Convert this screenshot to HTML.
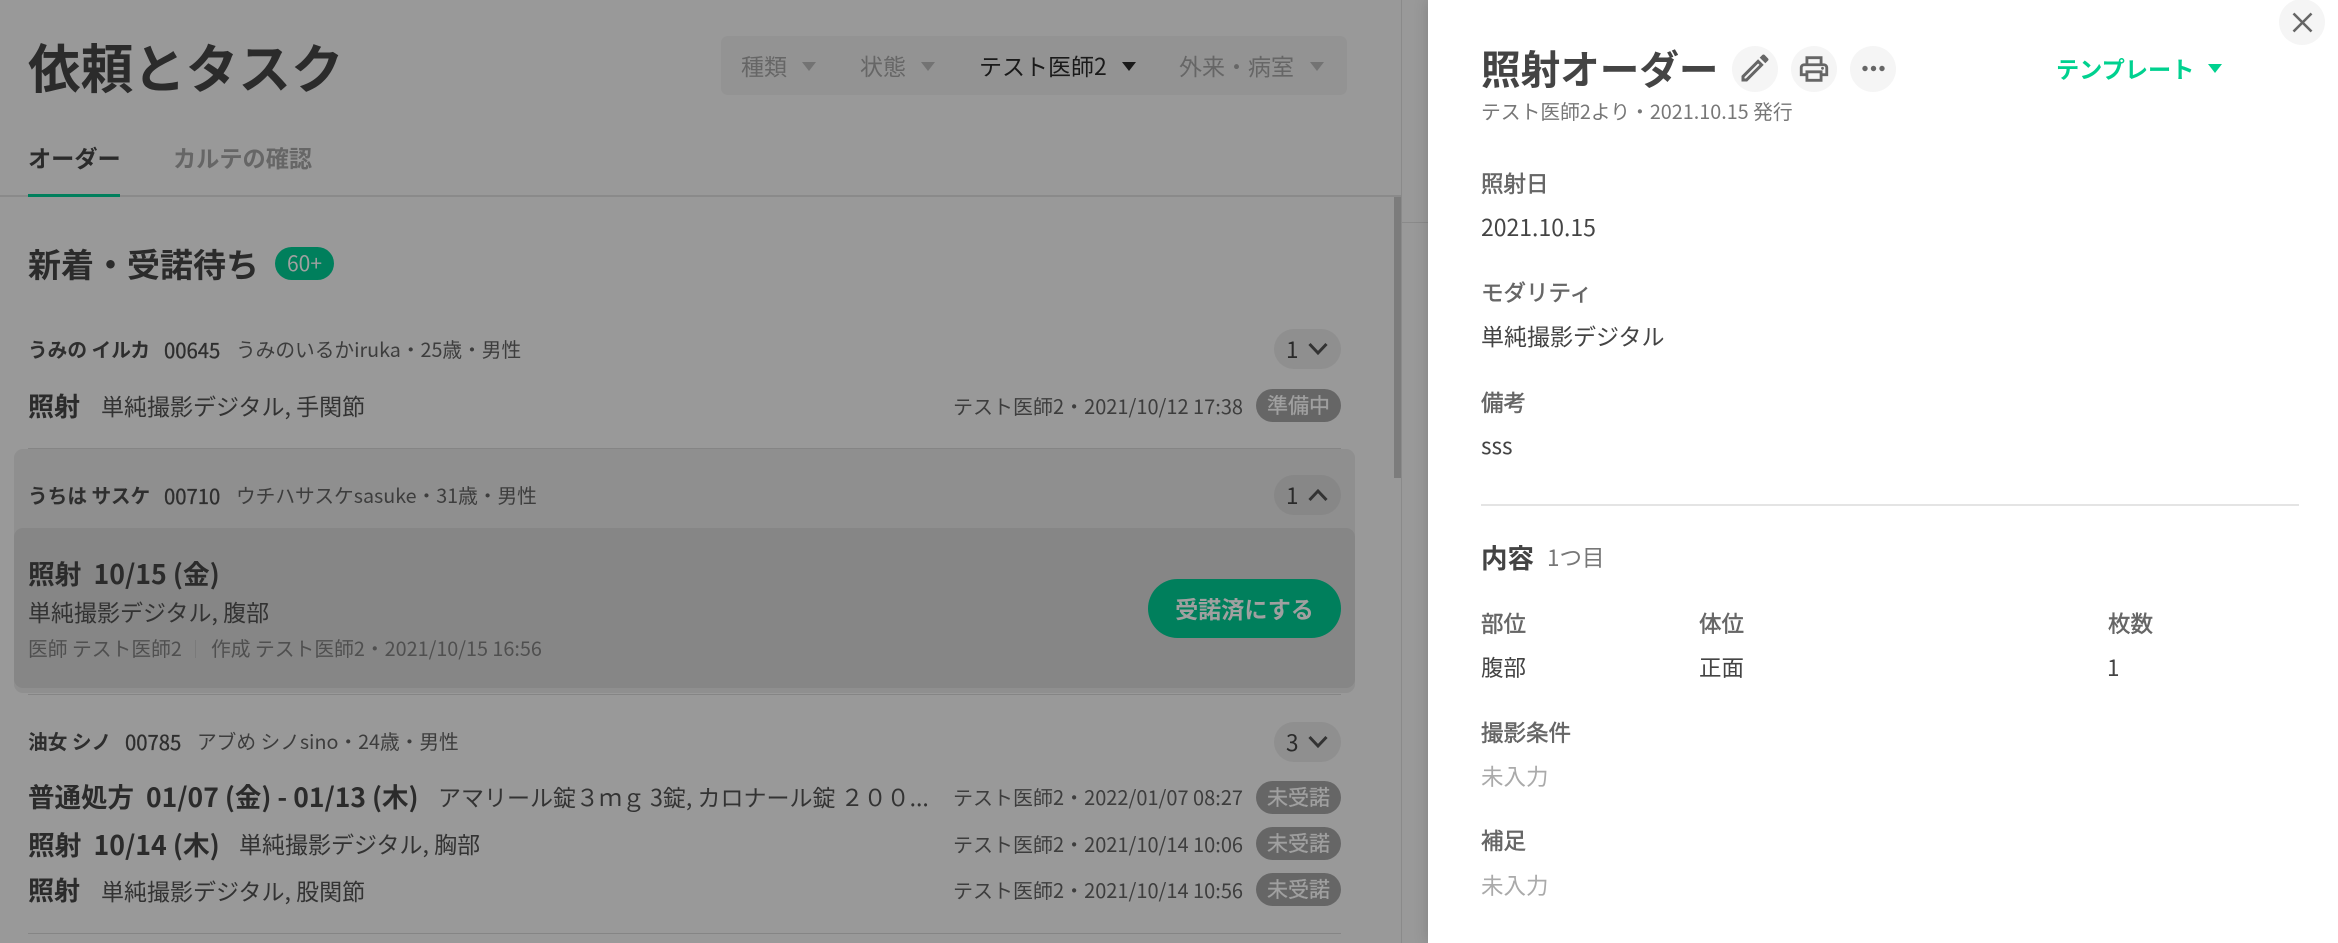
<!DOCTYPE html>
<html lang="ja"><head><meta charset="utf-8"><title>依頼とタスク</title>
<style>
html,body{margin:0;padding:0;width:2338px;height:943px;overflow:hidden;background:#999;font-family:"Noto Sans CJK JP","Liberation Sans",sans-serif;}
.t{position:absolute;white-space:nowrap;line-height:40px;height:40px;color:#333;font-size:23px;}
.b{position:absolute;}
.bd{font-weight:700;}
.tri{position:absolute;width:0;height:0;border-left:7.5px solid transparent;border-right:7.5px solid transparent;border-top:9px solid #737373;}
.n{font-size:19.7px;color:#2e2e2e;}
.m{font-size:20px;color:#3d3d3d;}
.st{position:absolute;left:1256px;width:85px;height:33px;border-radius:17px;background:#666;color:#a0a0a0;font-size:21px;line-height:32px;text-align:center;-webkit-text-stroke:.3px #a0a0a0;}
.pill{position:absolute;left:1274px;width:67px;height:40px;border-radius:20px;background:#8f8f8f;}
.pill span{position:absolute;left:12px;top:0;line-height:40px;font-size:22.5px;color:#2a2a2a;}
.pill svg{position:absolute;left:34px;top:13px;}
.l{font-size:22.5px;color:#666;-webkit-text-stroke:.5px #666;}
.v{font-size:22.5px;color:#444;}
.e{font-size:22.5px;color:#aaa;}
.c{position:absolute;width:46px;height:46px;border-radius:50%;background:#f5f5f5;}
.id{font-size:20.3px;-webkit-text-stroke:.3px #2e2e2e;}
</style></head><body>

<div class="b" style="left:1401px;top:0;width:1px;height:943px;background:#8a8a8a"></div>
<div class="b" style="left:1402px;top:222px;width:26px;height:1px;background:#8a8a8a"></div>
<div class="b" style="left:1394px;top:197px;width:7px;height:281px;background:#7c7c7c"></div>

<div class="t bd" style="left:28px;top:46px;font-size:52.6px;line-height:40px;color:#2b2b2b">依頼とタスク</div>

<div class="b" style="left:721px;top:36px;width:626px;height:59px;border-radius:7px;background:#939393"></div>
<div class="t" style="left:741px;top:45px;color:#666">種類</div>
<div class="tri" style="left:802px;top:62px"></div>
<div class="t" style="left:860px;top:45px;color:#666">状態</div>
<div class="tri" style="left:921px;top:62px"></div>
<div class="t" style="left:979px;top:45px;color:#1a1a1a">テスト医師2</div>
<div class="tri" style="left:1122px;top:62px;border-top-color:#1a1a1a"></div>
<div class="t" style="left:1179px;top:45px;color:#666">外来・病室</div>
<div class="tri" style="left:1310px;top:62px"></div>

<div class="t bd" style="left:28px;top:137px;color:#2b2b2b;font-size:23.2px">オーダー</div>
<div class="t bd" style="left:173px;top:137px;color:#666;font-size:23.2px">カルテの確認</div>
<div class="b" style="left:0;top:195px;width:1401px;height:2px;background:#8a8a8a"></div>
<div class="b" style="left:28px;top:194px;width:92px;height:3px;background:#007f5c"></div>

<div class="t bd" style="left:28px;top:243px;font-size:33px;color:#2b2b2b">新着・受諾待ち</div>
<div class="b" style="left:275px;top:247px;width:59px;height:33px;border-radius:17px;background:#007f5c;color:#a0a0a0;font-size:21px;line-height:32px;text-align:center">60+</div>

<div class="t n bd" style="left:28px;top:329px">うみの イルカ</div>
<div class="t n id" style="left:164px;top:329px">00645</div>
<div class="t n" style="left:236px;top:329px;color:#3d3d3d">うみのいるかiruka・25歳・男性</div>
<div class="pill" style="top:329px"><span>1</span><svg width="20" height="14" viewBox="0 0 20 14"><path d="M1.5 2 L10 11 L18.5 2" fill="none" stroke="#333" stroke-width="3"/></svg></div>
<div class="t bd" style="left:28px;top:386px;font-size:26px;color:#2b2b2b">照射</div>
<div class="t" style="left:101px;top:385px">単純撮影デジタル, 手関節</div>
<div class="t m" style="left:953px;top:386px">テスト医師2・2021/10/12 17:38</div>
<div class="st" style="top:389px">準備中</div>
<div class="b" style="left:28px;top:448px;width:1313px;height:1px;background:#858585"></div>

<div class="b" style="left:14px;top:449px;width:1341px;height:244px;border-radius:9px;background:#8f8f8f"></div>
<div class="b" style="left:14px;top:528px;width:1341px;height:160px;border-radius:9px;background:#868686"></div>
<div class="t n bd" style="left:28px;top:475px">うちは サスケ</div>
<div class="t n id" style="left:164px;top:475px">00710</div>
<div class="t n" style="left:236px;top:475px;color:#3d3d3d">ウチハサスケsasuke・31歳・男性</div>
<div class="pill" style="top:475px;background:#878787"><span>1</span><svg width="20" height="14" viewBox="0 0 20 14"><path d="M1.5 12 L10 3 L18.5 12" fill="none" stroke="#333" stroke-width="3"/></svg></div>
<div class="t bd" style="left:28px;top:553px;font-size:26.7px;color:#2b2b2b">照射&nbsp;&nbsp;10/15 (金)</div>
<div class="t" style="left:28px;top:591px">単純撮影デジタル, 腹部</div>
<div class="t" style="left:28px;top:628px;font-size:19.8px;color:#4f4f4f">医師 テスト医師2</div>
<div class="b" style="left:195px;top:640px;width:1px;height:18px;background:#7a7a7a"></div>
<div class="t" style="left:211px;top:628px;font-size:19.8px;color:#4f4f4f">作成 テスト医師2・2021/10/15 16:56</div>
<div class="b bd" style="left:1148px;top:579px;width:193px;height:59px;border-radius:30px;background:#007f5c;color:#a0a0a0;font-size:23.1px;line-height:59px;text-align:center">受諾済にする</div>
<div class="b" style="left:28px;top:694px;width:1313px;height:1px;background:#858585"></div>

<div class="t n bd" style="left:28px;top:721px">油女 シノ</div>
<div class="t n id" style="left:125px;top:721px">00785</div>
<div class="t n" style="left:197px;top:721px;color:#3d3d3d">アブめ シノsino・24歳・男性</div>
<div class="pill" style="top:722px"><span>3</span><svg width="20" height="14" viewBox="0 0 20 14"><path d="M1.5 2 L10 11 L18.5 2" fill="none" stroke="#333" stroke-width="3"/></svg></div>

<div class="t bd" style="left:28px;top:776px;font-size:26.5px;color:#2b2b2b">普通処方&nbsp;&nbsp;01/07 (金) - 01/13 (木)</div>
<div class="t" style="left:438px;top:776px">アマリール錠３ｍｇ 3錠, カロナール錠 ２００...</div>
<div class="t m" style="left:953px;top:777px">テスト医師2・2022/01/07 08:27</div>
<div class="st" style="top:781px">未受諾</div>

<div class="t bd" style="left:28px;top:824px;font-size:26.7px;color:#2b2b2b">照射&nbsp;&nbsp;10/14 (木)</div>
<div class="t" style="left:239px;top:823px">単純撮影デジタル, 胸部</div>
<div class="t m" style="left:953px;top:824px">テスト医師2・2021/10/14 10:06</div>
<div class="st" style="top:827px">未受諾</div>

<div class="t bd" style="left:28px;top:870px;font-size:26px;color:#2b2b2b">照射</div>
<div class="t" style="left:101px;top:870px">単純撮影デジタル, 股関節</div>
<div class="t m" style="left:953px;top:870px">テスト医師2・2021/10/14 10:56</div>
<div class="st" style="top:873px">未受諾</div>
<div class="b" style="left:28px;top:933px;width:1313px;height:1px;background:#858585"></div>

<div class="b" style="left:1428px;top:0;width:910px;height:943px;background:#fff;box-shadow:0 0 14px rgba(0,0,0,.16)"></div>

<div class="c" style="left:2279px;top:-1px"></div>
<svg class="b" style="left:2291px;top:11px" width="23" height="23" viewBox="0 0 23 23"><path d="M2.5 2.5 L20.5 20.5 M20.5 2.5 L2.5 20.5" stroke="#666" stroke-width="2.6" fill="none"/></svg>

<div class="t bd" style="left:1481px;top:48px;font-size:39.6px;color:#444">照射オーダー</div>
<div class="c" style="left:1732px;top:46px"></div>
<svg class="b" style="left:1737px;top:50px" width="36" height="36" viewBox="0 0 24 24"><path fill="#666" d="M3 17.25V21h3.75L17.81 9.94l-3.75-3.75L3 17.25zM5.92 19H5v-.92l9.06-9.06.92.92L5.92 19zM20.71 5.63l-2.34-2.34c-.2-.2-.45-.29-.71-.29s-.51.1-.7.29l-1.83 1.83 3.75 3.75 1.83-1.83c.39-.39.39-1.02 0-1.41z"/></svg>
<div class="c" style="left:1791px;top:46px"></div>
<svg class="b" style="left:1797px;top:52px" width="34" height="34" viewBox="0 0 24 24"><path fill="#666" d="M19 8h-1V3H6v5H5c-1.66 0-3 1.34-3 3v6h4v4h12v-4h4v-6c0-1.66-1.34-3-3-3zM8 5h8v3H8V5zm8 12v2H8v-4h8v2zm2-2v-2H6v2H4v-4c0-.55.45-1 1-1h14c.55 0 1 .45 1 1v4h-2z"/><circle fill="#666" cx="18" cy="11.5" r="1"/></svg>
<div class="c" style="left:1850px;top:46px"></div>
<svg class="b" style="left:1850px;top:46px" width="46" height="46" viewBox="0 0 46 46"><circle cx="15" cy="22.5" r="2.7" fill="#666"/><circle cx="23.5" cy="22.5" r="2.7" fill="#666"/><circle cx="32" cy="22.5" r="2.7" fill="#666"/></svg>

<div class="t bd" style="left:2056px;top:48px;color:#00d18f;font-size:23.2px">テンプレート</div>
<div class="tri" style="left:2208px;top:64px;border-top-color:#00d18f"></div>

<div class="t" style="left:1481px;top:91px;font-size:19.8px;color:#777">テスト医師2より・2021.10.15 発行</div>

<div class="t l" style="left:1481px;top:163px">照射日</div>
<div class="t v" style="left:1481px;top:206px;font-size:23px">2021.10.15</div>
<div class="t l" style="left:1481px;top:272px">モダリティ</div>
<div class="t v" style="left:1481px;top:315px;font-size:23px">単純撮影デジタル</div>
<div class="t l" style="left:1481px;top:382px">備考</div>
<div class="t v" style="left:1481px;top:425px">sss</div>
<div class="b" style="left:1481px;top:504px;width:818px;height:2px;background:#e4e4e4"></div>
<div class="t bd" style="left:1481px;top:537px;font-size:26.5px;color:#444">内容</div>
<div class="t" style="left:1547px;top:537px;color:#777;font-size:22.5px">1つ目</div>
<div class="t l" style="left:1481px;top:603px">部位</div>
<div class="t l" style="left:1699px;top:603px">体位</div>
<div class="t l" style="left:2108px;top:603px">枚数</div>
<div class="t v" style="left:1481px;top:647px">腹部</div>
<div class="t v" style="left:1699px;top:647px">正面</div>
<div class="t v" style="left:2107px;top:647px">1</div>
<div class="t l" style="left:1481px;top:712px">撮影条件</div>
<div class="t e" style="left:1481px;top:756px">未入力</div>
<div class="t l" style="left:1481px;top:820px">補足</div>
<div class="t e" style="left:1481px;top:865px">未入力</div>

</body></html>
